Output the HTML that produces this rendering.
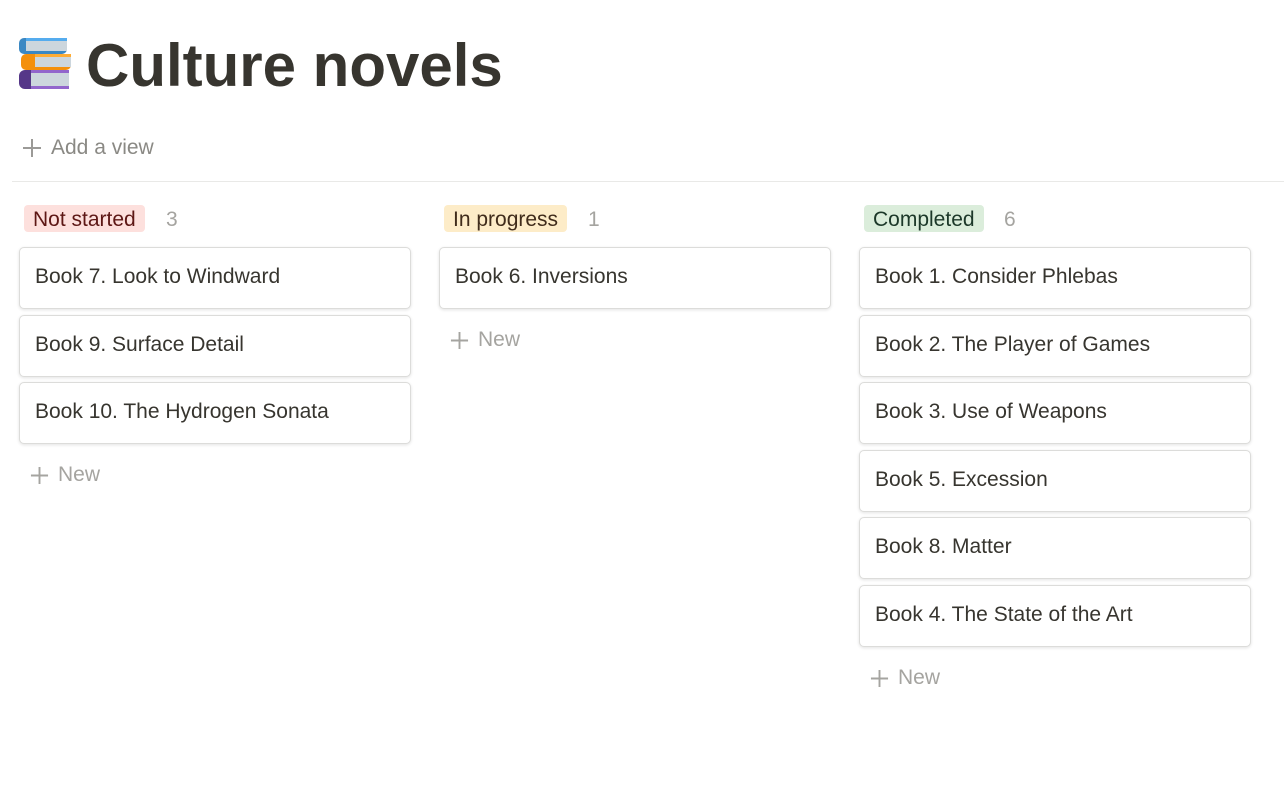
<!DOCTYPE html>
<html><head><meta charset="utf-8"><style>
body{margin:0;width:1284px;height:797px;background:#fff;font-family:"Liberation Sans",sans-serif;color:#37352f;position:relative;overflow:hidden}
.abs{position:absolute}
h1{position:absolute;left:86px;top:30px;margin:0;font-size:60px;font-weight:bold;line-height:72px;color:#37352f}
.addv{left:22px;top:135px;font-size:21px;color:#8a8984;line-height:26px}
.div{left:12px;top:181px;width:1272px;height:1px;background:#e9e9e7}
.tag{position:absolute;top:205px;height:27px;line-height:29px;padding:0 9px;border-radius:4px;font-size:21px}
.cnt{position:absolute;top:205px;line-height:29px;font-size:21px;color:#a5a4a0}
.card{position:absolute;width:390px;height:60px;border:1px solid #dcdcda;border-radius:5px;box-shadow:0 1px 3px rgba(15,15,15,.12);background:#fff;font-size:21px;line-height:58px;box-sizing:content-box}
.card span{margin-left:15px}
.new{position:absolute;font-size:21px;color:#a5a4a0;line-height:26px}
.plus{display:inline-block;vertical-align:middle;margin-right:9px}
</style></head><body>
<svg class="abs" style="left:17px;top:37px" width="56" height="54" viewBox="0 0 56 54">
<rect x="2" y="1" width="48" height="16" rx="5" fill="#3b88c3"/><rect x="9" y="4" width="41" height="10" fill="#ccd6dd"/><rect x="9" y="1" width="41" height="3" fill="#55acee"/>
<rect x="4" y="17" width="50" height="16" rx="5" fill="#f4900c"/><rect x="18" y="20" width="36" height="10" fill="#ccd6dd"/><rect x="18" y="17" width="36" height="3" fill="#ffac33"/>
<rect x="2" y="33" width="50" height="19" rx="6" fill="#553788"/><rect x="14" y="36" width="38" height="13" fill="#ccd6dd"/><rect x="14" y="33" width="38" height="3" fill="#9266cc"/><rect x="14" y="49" width="38" height="3" fill="#9266cc"/>
</svg>
<h1>Culture novels</h1>
<div class="abs addv"><svg class="plus" width="20" height="20" viewBox="0 0 20 20"><path d="M10 1v18M1 10h18" stroke="#9b9a97" stroke-width="2"/></svg>Add a view</div>
<div class="abs div"></div>

<div class="tag" style="left:24px;background:#fde0dd;color:#5d1715">Not started</div><div class="cnt" style="left:166px">3</div>
<div class="tag" style="left:444px;background:#fdecc8;color:#402c1b">In progress</div><div class="cnt" style="left:588px">1</div>
<div class="tag" style="left:864px;background:#dbeddb;color:#1c3829">Completed</div><div class="cnt" style="left:1004px">6</div>

<div class="card" style="left:19px;top:247px"><span>Book 7. Look to Windward</span></div>
<div class="card" style="left:19px;top:315px"><span>Book 9. Surface Detail</span></div>
<div class="card" style="left:19px;top:382px"><span>Book 10. The Hydrogen Sonata</span></div>
<div class="new" style="left:30px;top:462px"><svg class="plus" width="19" height="19" viewBox="0 0 20 20"><path d="M10 1v18M1 10h18" stroke="#a5a4a0" stroke-width="2"/></svg>New</div>

<div class="card" style="left:439px;top:247px"><span>Book 6. Inversions</span></div>
<div class="new" style="left:450px;top:327px"><svg class="plus" width="19" height="19" viewBox="0 0 20 20"><path d="M10 1v18M1 10h18" stroke="#a5a4a0" stroke-width="2"/></svg>New</div>

<div class="card" style="left:859px;top:247px"><span>Book 1. Consider Phlebas</span></div>
<div class="card" style="left:859px;top:315px"><span>Book 2. The Player of Games</span></div>
<div class="card" style="left:859px;top:382px"><span>Book 3. Use of Weapons</span></div>
<div class="card" style="left:859px;top:450px"><span>Book 5. Excession</span></div>
<div class="card" style="left:859px;top:517px"><span>Book 8. Matter</span></div>
<div class="card" style="left:859px;top:585px"><span>Book 4. The State of the Art</span></div>
<div class="new" style="left:870px;top:665px"><svg class="plus" width="19" height="19" viewBox="0 0 20 20"><path d="M10 1v18M1 10h18" stroke="#a5a4a0" stroke-width="2"/></svg>New</div>
</body></html>
